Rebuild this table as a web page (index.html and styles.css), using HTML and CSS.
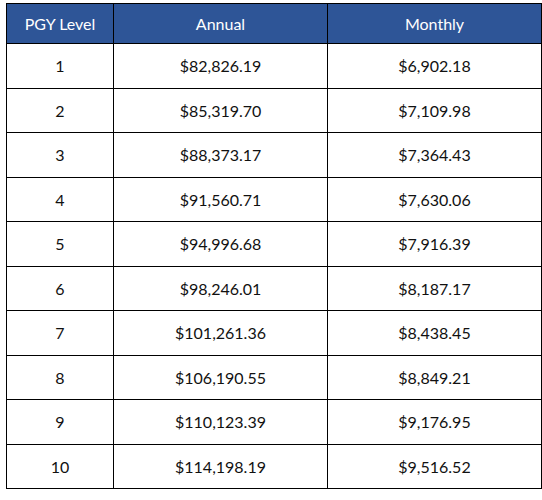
FILE: index.html
```html
<!DOCTYPE html>
<html>
<head>
<meta charset="utf-8">
<link rel="stylesheet" href="styles.css">
</head>
<body>
<table class="pay">
  <thead>
    <tr><th class="c1">PGY Level</th><th class="c2">Annual</th><th class="c3">Monthly</th></tr>
  </thead>
  <tbody>
    <tr><td>1</td><td>$82,826.19</td><td>$6,902.18</td></tr>
    <tr><td>2</td><td>$85,319.70</td><td>$7,109.98</td></tr>
    <tr><td>3</td><td>$88,373.17</td><td>$7,364.43</td></tr>
    <tr><td>4</td><td>$91,560.71</td><td>$7,630.06</td></tr>
    <tr><td>5</td><td>$94,996.68</td><td>$7,916.39</td></tr>
    <tr><td>6</td><td>$98,246.01</td><td>$8,187.17</td></tr>
    <tr><td>7</td><td>$101,261.36</td><td>$8,438.45</td></tr>
    <tr><td>8</td><td>$106,190.55</td><td>$8,849.21</td></tr>
    <tr><td>9</td><td>$110,123.39</td><td>$9,176.95</td></tr>
    <tr><td>10</td><td>$114,198.19</td><td>$9,516.52</td></tr>
  </tbody>
</table>
</body>
</html>
```
FILE: styles.css
```css
html, body {
  margin: 0;
  padding: 0;
  background: #ffffff;
}
body {
  padding: 3px 0 0 6px;
  font-family: Lato, "Open Sans", sans-serif;
}
.pay {
  border-collapse: collapse;
  table-layout: fixed;
  width: 533px;
}
.pay th, .pay td {
  border: 1.5px solid #000;
  text-align: center;
  padding: 0;
  font-size: 16px;
}
.pay th {
  background: #2e5597;
  color: #ffffff;
  font-weight: normal;
  height: 39px;
}
.pay td {
  color: #111111;
  height: 43.5px;
}
.c1 { width: 106px; }
.c2 { width: 213px; }
.c3 { width: 213px; }
```
